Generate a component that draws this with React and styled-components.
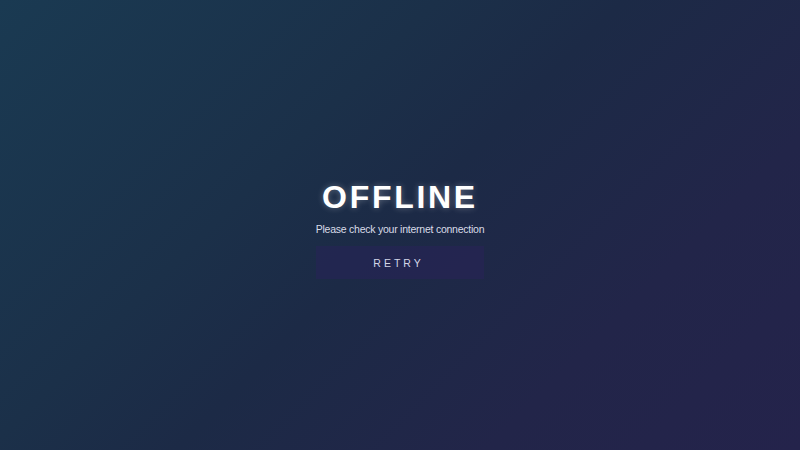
import React from 'react';
import styled, { createGlobalStyle } from 'styled-components';

const GlobalStyle = createGlobalStyle`
    html, body {
        margin: 0;
        padding: 0;
        height: 100%;
    }

    body {
        font-family: "Liberation Sans", Arial, sans-serif;
    }

    #root {
        height: 100%;
    }
`;

const Screen = styled.div`
    height: 100vh;
    display: flex;
    align-items: center;
    justify-content: center;
    background: linear-gradient(135deg, #1a3a52 0%, #1b3049 35%, #1c2a46 50%, #222549 75%, #24234b 100%);
`;

const Panel = styled.div`
    display: flex;
    flex-direction: column;
    align-items: stretch;
    text-align: center;
    margin-top: 8px;
`;

const Title = styled.h1`
    margin: 0 0 8px;
    font-size: 32px;
    line-height: 36px;
    font-weight: 700;
    letter-spacing: 2.7px;
    color: #ffffff;
    text-shadow: 0 0 6px rgba(255, 255, 255, 0.3);
`;

const Message = styled.p`
    margin: 0 0 11px;
    font-size: 10.5px;
    line-height: 12px;
    letter-spacing: -0.24px;
    color: #d9dce8;
`;

const RetryButton = styled.button`
    height: 33px;
    border: none;
    background: rgba(44, 32, 96, 0.4);
    color: #d4d7e8;
    font-family: inherit;
    font-size: 10.5px;
    letter-spacing: 3px;
    padding-left: 3px;
    cursor: pointer;
`;

export default function App() {
    return (
        <>
            <GlobalStyle />
            <Screen>
                <Panel>
                    <Title>OFFLINE</Title>
                    <Message>Please check your internet connection</Message>
                    <RetryButton>RETRY</RetryButton>
                </Panel>
            </Screen>
        </>
    );
}
